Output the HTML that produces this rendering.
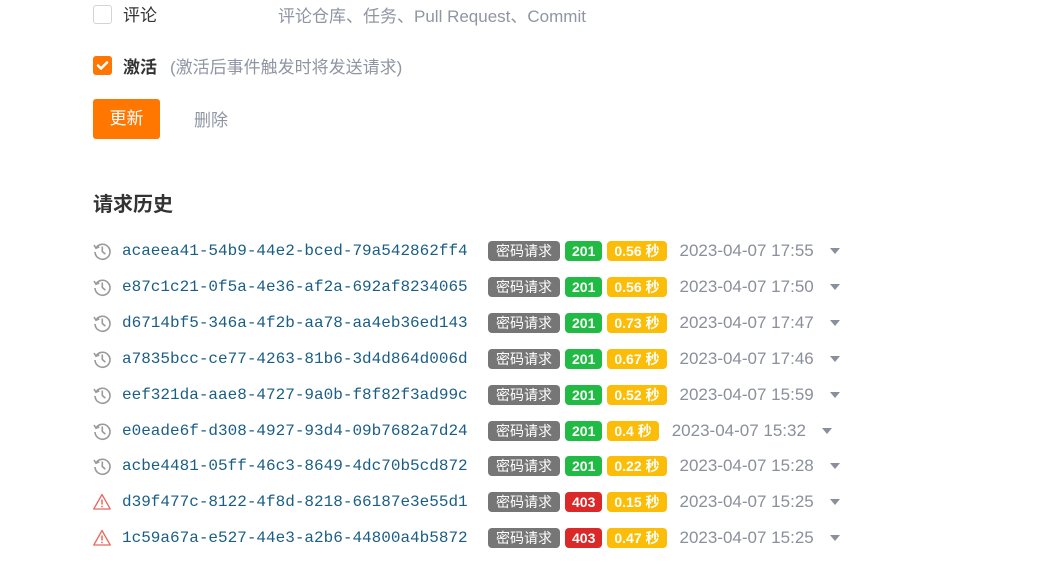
<!DOCTYPE html>
<html><head><meta charset="utf-8"><style>
body{margin:0;width:1058px;height:578px;background:#fff;font-family:"Liberation Sans","Noto Sans CJK SC",sans-serif;overflow:hidden;position:relative}
.abs{position:absolute}
.cb{position:absolute;width:17px;height:17px;border:1px solid #d4d4d5;border-radius:3px;background:#fff}
.lbl{font-size:17px;color:#333}
.gray{color:#8f95a3}
.row{position:absolute;left:92px;height:24px;display:flex;align-items:center;white-space:nowrap}
.ic{width:20px;height:20px;margin-right:10px}
.hash{font-family:"Liberation Mono",monospace;font-size:16px;color:#1a5e85;width:346px;margin-right:20px}
.b{display:inline-block;height:20px;line-height:20px;border-radius:4px;color:#fff;font-size:14px;padding:0 7px;margin-right:5px}
.bg{background:#767676;padding:0 8px}
.gr{background:#21ba45;font-weight:bold}
.rd{background:#db2828;font-weight:bold}
.yl{background:#fbbd08;font-weight:bold}
.dt{font-size:17px;color:#8a8f9c;margin-left:8px}
.car{width:0;height:0;border-left:5px solid transparent;border-right:5px solid transparent;border-top:6px solid #8a8f9c;margin-left:16px}
</style></head><body>
<div class="cb" style="left:93px;top:5px;width:17px;height:17px"></div>
<div class="abs lbl" style="left:123px;top:1px">评论</div>
<div class="abs gray" style="left:278px;top:2px;font-size:17px">评论仓库、任务、Pull Request、Commit</div>
<div class="abs" style="left:93px;top:56px;width:19px;height:19px;background:#ff7600;border-radius:3px">
<svg width="19" height="19" viewBox="0 0 19 19"><path d="M5 9.5l3 3 6-6" stroke="#fff" stroke-width="2.6" fill="none" stroke-linecap="round" stroke-linejoin="round"/></svg></div>
<div class="abs lbl" style="left:123px;top:53px;font-weight:bold">激活</div>
<div class="abs gray" style="left:170px;top:53px;font-size:17px">(激活后事件触发时将发送请求)</div>
<div class="abs" style="left:93px;top:99px;width:67px;height:40px;background:#ff7600;border-radius:3px;color:#fff;font-size:17px;line-height:40px;text-align:center">更新</div>
<div class="abs gray" style="left:194px;top:106px;font-size:17px">删除</div>
<div class="abs" style="left:93px;top:188px;font-size:20px;font-weight:bold;color:#333">请求历史</div>

<svg width="0" height="0" style="position:absolute"><defs>
<symbol id="h" viewBox="0 0 20 20"><path d="M4 7A7.5 7.5 0 1 1 3 11" stroke="#9a9a9a" stroke-width="1.6" fill="none"/><path d="M2 4l2 3.2 3.3-1.3" stroke="#9a9a9a" stroke-width="1.6" fill="none"/><path d="M10.3 5.5v5l3 2.6" stroke="#9a9a9a" stroke-width="1.6" fill="none"/></symbol>
<symbol id="w" viewBox="0 0 20 20"><path d="M10 2.5L1.8 17h16.4z" stroke="#e8685f" stroke-width="1.3" fill="none" stroke-linejoin="round"/><path d="M10 7.5v5" stroke="#e8685f" stroke-width="1.5"/><circle cx="10" cy="14.5" r="0.9" fill="#e8685f"/></symbol>
</defs></svg>

<div class="row" style="top:239px"><svg class="ic"><use href="#h"/></svg><span class="hash">acaeea41-54b9-44e2-bced-79a542862ff4</span><span class="b bg">密码请求</span><span class="b gr">201</span><span class="b yl">0.56 秒</span><span class="dt">2023-04-07 17:55</span><span class="car"></span></div>
<div class="row" style="top:275px"><svg class="ic"><use href="#h"/></svg><span class="hash">e87c1c21-0f5a-4e36-af2a-692af8234065</span><span class="b bg">密码请求</span><span class="b gr">201</span><span class="b yl">0.56 秒</span><span class="dt">2023-04-07 17:50</span><span class="car"></span></div>
<div class="row" style="top:311px"><svg class="ic"><use href="#h"/></svg><span class="hash">d6714bf5-346a-4f2b-aa78-aa4eb36ed143</span><span class="b bg">密码请求</span><span class="b gr">201</span><span class="b yl">0.73 秒</span><span class="dt">2023-04-07 17:47</span><span class="car"></span></div>
<div class="row" style="top:347px"><svg class="ic"><use href="#h"/></svg><span class="hash">a7835bcc-ce77-4263-81b6-3d4d864d006d</span><span class="b bg">密码请求</span><span class="b gr">201</span><span class="b yl">0.67 秒</span><span class="dt">2023-04-07 17:46</span><span class="car"></span></div>
<div class="row" style="top:383px"><svg class="ic"><use href="#h"/></svg><span class="hash">eef321da-aae8-4727-9a0b-f8f82f3ad99c</span><span class="b bg">密码请求</span><span class="b gr">201</span><span class="b yl">0.52 秒</span><span class="dt">2023-04-07 15:59</span><span class="car"></span></div>
<div class="row" style="top:419px"><svg class="ic"><use href="#h"/></svg><span class="hash">e0eade6f-d308-4927-93d4-09b7682a7d24</span><span class="b bg">密码请求</span><span class="b gr">201</span><span class="b yl">0.4 秒</span><span class="dt">2023-04-07 15:32</span><span class="car"></span></div>
<div class="row" style="top:454px"><svg class="ic"><use href="#h"/></svg><span class="hash">acbe4481-05ff-46c3-8649-4dc70b5cd872</span><span class="b bg">密码请求</span><span class="b gr">201</span><span class="b yl">0.22 秒</span><span class="dt">2023-04-07 15:28</span><span class="car"></span></div>
<div class="row" style="top:490px"><svg class="ic"><use href="#w"/></svg><span class="hash">d39f477c-8122-4f8d-8218-66187e3e55d1</span><span class="b bg">密码请求</span><span class="b rd">403</span><span class="b yl">0.15 秒</span><span class="dt">2023-04-07 15:25</span><span class="car"></span></div>
<div class="row" style="top:526px"><svg class="ic"><use href="#w"/></svg><span class="hash">1c59a67a-e527-44e3-a2b6-44800a4b5872</span><span class="b bg">密码请求</span><span class="b rd">403</span><span class="b yl">0.47 秒</span><span class="dt">2023-04-07 15:25</span><span class="car"></span></div>
</body></html>
